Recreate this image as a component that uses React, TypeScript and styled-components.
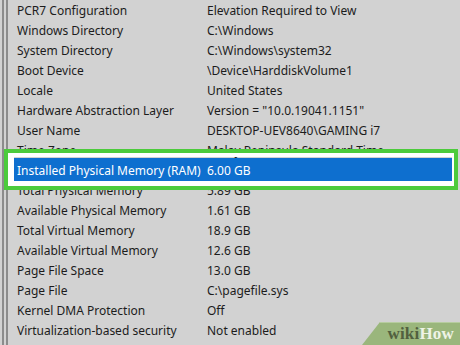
import React from "react";
import styled, { createGlobalStyle } from "styled-components";

const Global = createGlobalStyle`
  html, body { margin: 0; padding: 0; }
  body { background: #d2d2d2; overflow: hidden; }
`;

const Page = styled.div`
  position: relative;
  width: 460px;
  height: 345px;
  overflow: hidden;
  background: #d2d2d2;
  font-family: "Noto Sans", "Open Sans", sans-serif;
  font-size: 12px;
  color: #1c1c1c;
`;

const Panel = styled.div`
  margin-left: 2px;
  height: 100%;
  border-left: 6px double #8c8c8c;
  padding-top: 1px;
  display: flex;
  flex-direction: column;
`;

const Row = styled.div<{ $selected?: boolean }>`
  display: grid;
  grid-template-columns: 190px 1fr;
  height: 20px;
  flex: 0 0 20px;
  align-items: center;
  padding-left: 9px;
  margin-right: 8px;
  white-space: nowrap;
  background: ${(p) => (p.$selected ? "#0e6fcf" : "transparent")};
  color: ${(p) => (p.$selected ? "#ffffff" : "inherit")};
  box-shadow: ${(p) => (p.$selected ? "0 -3px 0 #0e6fcf" : "none")};
`;

const Cell = styled.span`
  line-height: 20px;
`;

const Frame = styled.div`
  position: absolute;
  left: 4px;
  top: 149px;
  width: 454px;
  height: 41px;
  box-sizing: border-box;
  border: 4px solid #4ccb3c;
`;

const FrameInner = styled.div`
  height: 100%;
  box-sizing: border-box;
  border-style: solid;
  border-color: #ffffff;
  border-width: 4px 2px 5px 6px;
`;

const Badge = styled.div`
  position: absolute;
  right: 0;
  bottom: 0;
  width: 98px;
  height: 23px;
  background: #9ab67c;
  clip-path: polygon(18px 0, 100% 0, 100% 100%, 0 100%);
  border-top: 1px solid #b7cda0;
  display: flex;
  align-items: center;
  justify-content: flex-end;
  padding-right: 6px;
  box-sizing: border-box;
  font-family: "Liberation Serif", "DejaVu Serif", serif;
  font-weight: bold;
  font-size: 17px;
  letter-spacing: 0.2px;
`;

const Wiki = styled.span`
  color: #52603f;
`;

const How = styled.span`
  color: #eef3e6;
`;

const rows: [string, string][] = [
  ["PCR7 Configuration", "Elevation Required to View"],
  ["Windows Directory", "C:\\Windows"],
  ["System Directory", "C:\\Windows\\system32"],
  ["Boot Device", "\\Device\\HarddiskVolume1"],
  ["Locale", "United States"],
  ["Hardware Abstraction Layer", 'Version = "10.0.19041.1151"'],
  ["User Name", "DESKTOP-UEV8640\\GAMING i7"],
  ["Time Zone", "Malay Peninsula Standard Time"],
  ["Installed Physical Memory (RAM)", "6.00 GB"],
  ["Total Physical Memory", "5.89 GB"],
  ["Available Physical Memory", "1.61 GB"],
  ["Total Virtual Memory", "18.9 GB"],
  ["Available Virtual Memory", "12.6 GB"],
  ["Page File Space", "13.0 GB"],
  ["Page File", "C:\\pagefile.sys"],
  ["Kernel DMA Protection", "Off"],
  ["Virtualization-based security", "Not enabled"],
  ["Device Encryption Support", "Elevation Required to View"],
];

export default function App() {
  return (
    <>
      <Global />
      <Page>
        <Panel>
          {rows.map(([k, v], i) => (
            <Row key={k} $selected={i === 8}>
              <Cell>{k}</Cell>
              <Cell>{v}</Cell>
            </Row>
          ))}
        </Panel>
        <Frame>
          <FrameInner />
        </Frame>
        <Badge>
          <Wiki>wiki</Wiki>
          <How>How</How>
        </Badge>
      </Page>
    </>
  );
}
